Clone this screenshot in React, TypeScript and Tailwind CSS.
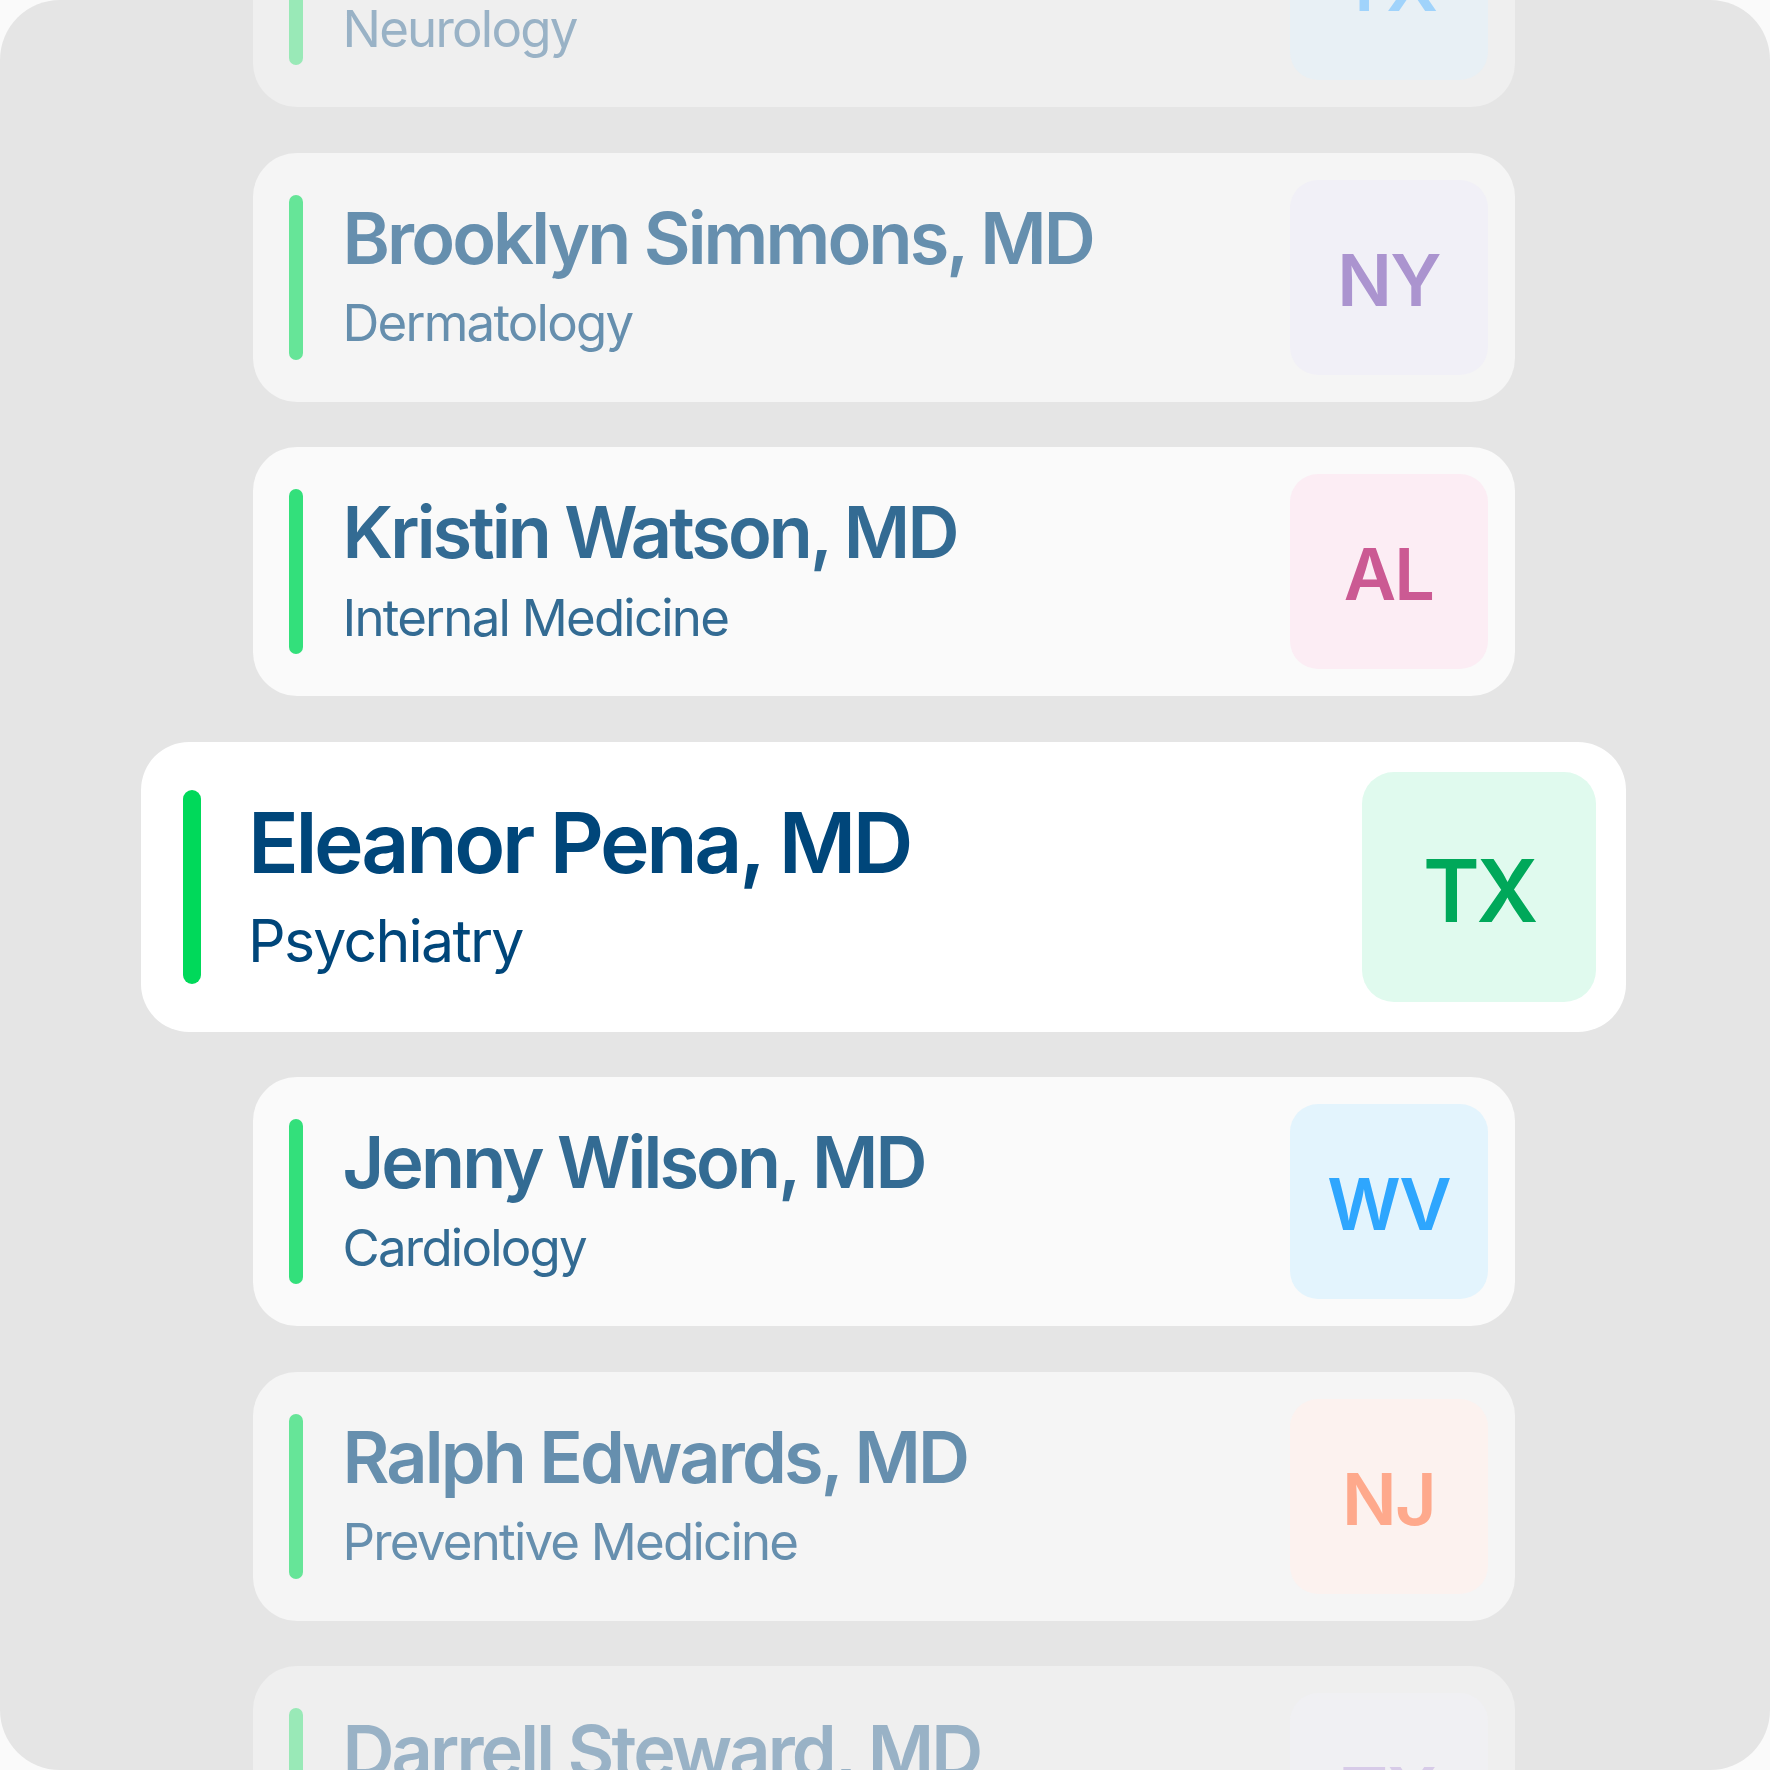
import React from "react";

type Card = {
  name: string;
  spec: string;
  state: string;
  cardBg: string;
  bar: string;
  text: string;
  badge: string;
};

const cards: Card[] = [
  {
    name: "Cameron Williamson, MD",
    spec: "Neurology",
    state: "TX",
    cardBg: "bg-[#efefef]",
    bar: "bg-[#99e9b7]",
    text: "text-[#99b2c6]",
    badge: "bg-[#e8f0f5] text-[#a0d3fb]",
  },
  {
    name: "Brooklyn Simmons, MD",
    spec: "Dermatology",
    state: "NY",
    cardBg: "bg-[#f5f5f5]",
    bar: "bg-[#66e598]",
    text: "text-[#668fae]",
    badge: "bg-[#f1f0f7] text-[#ab94cf]",
  },
  {
    name: "Kristin Watson, MD",
    spec: "Internal Medicine",
    state: "AL",
    cardBg: "bg-[#fafafa]",
    bar: "bg-[#33e07b]",
    text: "text-[#336b93]",
    badge: "bg-[#fcedf4] text-[#cb5a93]",
  },
  {
    name: "Eleanor Pena, MD",
    spec: "Psychiatry",
    state: "TX",
    cardBg: "bg-white",
    bar: "bg-[#00d95a]",
    text: "text-[#00467a]",
    badge: "bg-[#e0faee] text-[#00a85a]",
  },
  {
    name: "Jenny Wilson, MD",
    spec: "Cardiology",
    state: "WV",
    cardBg: "bg-[#fafafa]",
    bar: "bg-[#33e07b]",
    text: "text-[#336b93]",
    badge: "bg-[#e3f4fd] text-[#2ea6fe]",
  },
  {
    name: "Ralph Edwards, MD",
    spec: "Preventive Medicine",
    state: "NJ",
    cardBg: "bg-[#f5f5f5]",
    bar: "bg-[#66e598]",
    text: "text-[#668fae]",
    badge: "bg-[#fcf2ef] text-[#fea98c]",
  },
  {
    name: "Darrell Steward, MD",
    spec: "Pediatrics",
    state: "TX",
    cardBg: "bg-[#efefef]",
    bar: "bg-[#99e9b7]",
    text: "text-[#99b2c6]",
    badge: "bg-[#f0f0f3] text-[#d7cbe8]",
  },
];

function SmallCard({ c }: { c: Card }) {
  return (
    <div
      className={`w-[1262px] h-[249px] shrink-0 rounded-[44px] flex items-center pl-[36px] pr-[27px] ${c.cardBg}`}
    >
      <div className={`w-[14px] h-[165px] rounded-full shrink-0 ${c.bar}`} />
      <div className={`ml-[40px] flex-1 min-w-0 flex flex-col gap-[11px] mb-[6px] ${c.text}`}>
        <div className="text-[72px] leading-[1.2] font-semibold tracking-[-0.04em] whitespace-nowrap">
          {c.name}
        </div>
        <div className="text-[51px] leading-[1.2] tracking-[-0.035em] whitespace-nowrap">
          {c.spec}
        </div>
      </div>
      <div
        className={`w-[198px] h-[195px] shrink-0 rounded-[28px] flex items-center justify-center pt-[5px] text-[72px] font-semibold tracking-tight ${c.badge}`}
      >
        {c.state}
      </div>
    </div>
  );
}

function MainCard({ c }: { c: Card }) {
  return (
    <div
      className={`w-[1485px] h-[290px] shrink-0 rounded-[48px] flex items-center pl-[42px] pr-[30px] ${c.cardBg}`}
    >
      <div className={`w-[18px] h-[194px] rounded-full shrink-0 ${c.bar}`} />
      <div className={`ml-[47px] flex-1 min-w-0 flex flex-col gap-[12px] mb-[3px] ${c.text}`}>
        <div className="text-[84px] leading-[1.2] font-semibold tracking-[-0.04em] whitespace-nowrap">
          {c.name}
        </div>
        <div className="text-[59px] leading-[1.2] tracking-[-0.03em] whitespace-nowrap">
          {c.spec}
        </div>
      </div>
      <div
        className={`w-[234px] h-[230px] shrink-0 rounded-[32px] flex items-center justify-center pt-[10px] text-[86px] font-semibold tracking-[-0.04em] ${c.badge}`}
      >
        {c.state}
      </div>
    </div>
  );
}

export default function App() {
  return (
    <div className="w-[1770px] h-[1770px] bg-[#fafafa] font-[Inter,sans-serif]">
      <div className="w-full h-full rounded-[60px] bg-[#e5e5e5] overflow-hidden flex flex-col items-center justify-center gap-[45.5px] pr-[3px] pt-[3px]">
        {cards.map((c, i) =>
          i === 3 ? <MainCard key={i} c={c} /> : <SmallCard key={i} c={c} />
        )}
      </div>
    </div>
  );
}
